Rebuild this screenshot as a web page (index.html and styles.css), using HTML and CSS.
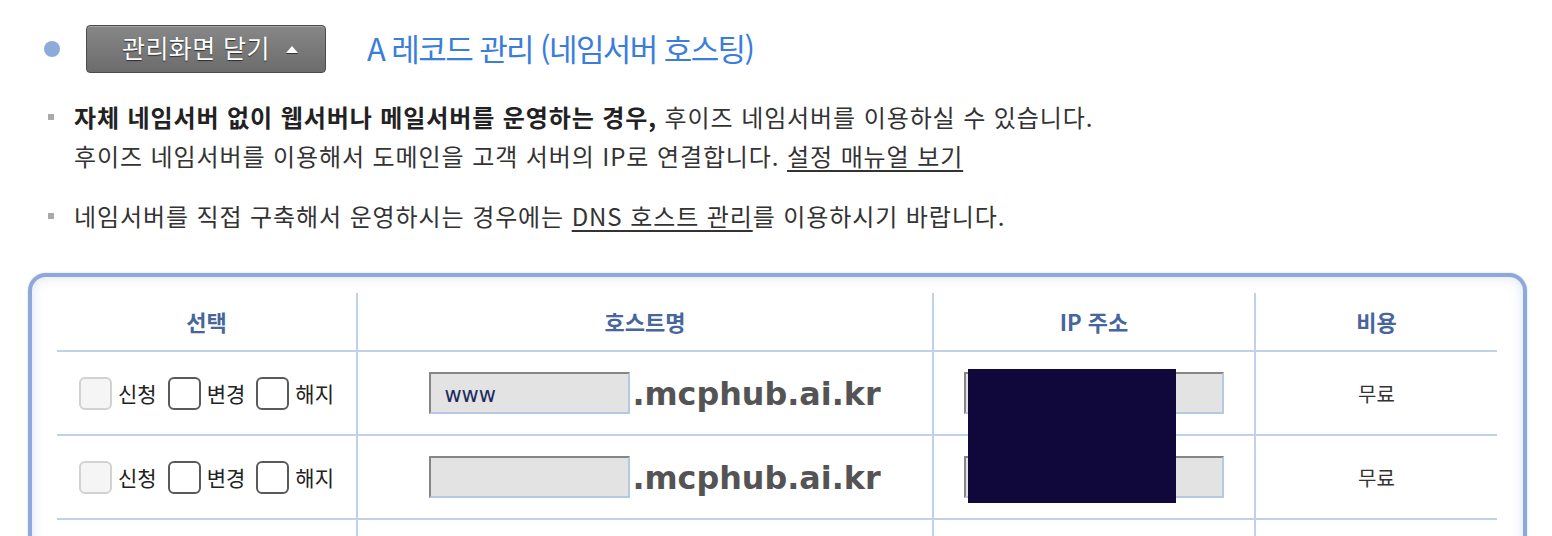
FILE: index.html
```html
<!DOCTYPE html>
<html lang="ko">
<head>
<meta charset="utf-8">
<title>A 레코드 관리</title>
<link rel="stylesheet" href="styles.css">
</head>
<body>
<div class="page">
  <div class="head">
    <span class="dot"></span>
    <button class="toggle" type="button"><span class="toggle-label">관리화면 닫기</span><span class="tri"></span></button>
    <h1 class="title">A 레코드 관리 (네임서버 호스팅)</h1>
  </div>

  <ul class="notes">
    <li><b>자체 네임서버 없이 웹서버나 메일서버를 운영하는 경우,</b> 후이즈 네임서버를 이용하실 수 있습니다.<br>후이즈 네임서버를 이용해서 도메인을 고객 서버의 IP로 연결합니다. <a class="link" href="#">설정 매뉴얼 보기</a></li>
    <li>네임서버를 직접 구축해서 운영하시는 경우에는 <a class="link" href="#">DNS 호스트 관리</a>를 이용하시기 바랍니다.</li>
  </ul>

  <div class="panel">
    <div class="grid">
      <div class="cell th">선택</div>
      <div class="cell th">호스트명</div>
      <div class="cell th">IP 주소</div>
      <div class="cell th last">비용</div>

      <div class="cell row">
        <label class="opt"><input type="checkbox" class="chk" disabled><span>신청</span></label>
        <label class="opt"><input type="checkbox" class="chk"><span>변경</span></label>
        <label class="opt"><input type="checkbox" class="chk"><span>해지</span></label>
      </div>
      <div class="cell row hostcell"><input class="field host" type="text" value="www"><span class="domain">.mcphub.ai.kr</span></div>
      <div class="cell row"><input class="field ip" type="text" value=""></div>
      <div class="cell row last fee">무료</div>

      <div class="cell row">
        <label class="opt"><input type="checkbox" class="chk" disabled><span>신청</span></label>
        <label class="opt"><input type="checkbox" class="chk"><span>변경</span></label>
        <label class="opt"><input type="checkbox" class="chk"><span>해지</span></label>
      </div>
      <div class="cell row hostcell"><input class="field host" type="text" value=""><span class="domain">.mcphub.ai.kr</span></div>
      <div class="cell row"><input class="field ip" type="text" value=""></div>
      <div class="cell row last fee">무료</div>

      <div class="cell row"></div>
      <div class="cell row"></div>
      <div class="cell row"></div>
      <div class="cell row last"></div>
    </div>
    <div class="redact"></div>
  </div>
</div>
</body>
</html>
```

FILE: styles.css
```css
html, body {
  margin: 0;
  padding: 0;
  background: #ffffff;
}

body {
  font-family: "Noto Sans CJK KR", "Noto Sans", sans-serif;
  color: #333333;
  overflow: hidden;
}

.page {
  width: 1552px;
}

/* ---------- header row ---------- */
.head {
  display: flex;
  align-items: center;
  padding: 25px 0 0 44px;
  height: 48px;
}

.dot {
  width: 16px;
  height: 16px;
  border-radius: 50%;
  background: #8eaadb;
  flex: none;
}

.toggle {
  margin-left: 26px;
  width: 240px;
  height: 48px;
  box-sizing: border-box;
  display: flex;
  align-items: center;
  padding: 0 0 0 35px;
  border: 1px solid #4b4b4b;
  border-radius: 4px;
  background: linear-gradient(#878787, #6c6c6c);
  box-shadow: inset 0 1px 0 rgba(255, 255, 255, 0.25);
  color: #ffffff;
  font-family: "Noto Sans CJK KR", sans-serif;
  font-size: 25px;
  letter-spacing: 0.4px;
  text-shadow: 0 1px 1px #2e2e2e;
  cursor: pointer;
}

.toggle-label {
  line-height: 1;
  margin-top: -3px;
}

.tri {
  width: 0;
  height: 0;
  margin-left: 16px;
  border-left: 6px solid transparent;
  border-right: 6px solid transparent;
  border-bottom: 7px solid #ffffff;
  filter: drop-shadow(0 1px 0 #333);
}

.title {
  margin: -4px 0 0 41px;
  font-size: 31px;
  font-weight: 400;
  letter-spacing: -1.6px;
  color: #3b7ddb;
  line-height: 1;
}

/* ---------- notes ---------- */
.notes {
  list-style: none;
  margin: 24px 0 0 0;
  padding: 0 0 0 74px;
}

.notes li {
  position: relative;
  font-size: 24px;
  line-height: 39px;
  color: #333333;
  letter-spacing: 0.9px;
}

.notes li + li {
  margin-top: 21px;
}

.notes li::before {
  content: "";
  position: absolute;
  left: -26px;
  top: 17px;
  width: 6px;
  height: 6px;
  background: #aaaaaa;
}

.notes b {
  color: #222222;
  font-weight: 700;
}

.link {
  color: #333333;
  text-decoration: underline;
  text-underline-offset: 4px;
  text-decoration-thickness: 2px;
}

/* ---------- panel / table ---------- */
.panel {
  position: relative;
  margin: 38px 0 0 28px;
  width: 1499px;
  height: 400px;
  box-sizing: border-box;
  padding: 16px 26px 0 25px;
  border: 4px solid #8ea8d9;
  border-radius: 18px;
  box-shadow: inset 0 0 12px rgba(150, 172, 220, 0.35), 0 0 2px rgba(142, 168, 217, 0.6);
  background: #ffffff;
}

.grid {
  display: grid;
  grid-template-columns: 301px 576px 322px 241px;
}

.cell {
  box-sizing: border-box;
  border-right: 2px solid #c2d1ea;
  border-bottom: 2px solid #c2d1ea;
  display: flex;
  align-items: center;
  justify-content: center;
}

.cell.last {
  border-right: none;
}

.th {
  height: 59px;
  font-size: 22px;
  font-weight: 700;
  color: #47669b;
  padding-bottom: 2px;
}

.row {
  height: 84px;
}

.hostcell {
  padding-left: 20px;
}

.opt {
  display: inline-flex;
  align-items: center;
  font-size: 21px;
  color: #222222;
  margin-right: 11px;
}

.opt:last-child {
  margin-right: 0;
}

.opt span {
  margin-left: 6px;
}

.chk {
  appearance: none;
  -webkit-appearance: none;
  margin: 0;
  width: 33px;
  height: 33px;
  box-sizing: border-box;
  border: 2px solid #5a5a5a;
  border-radius: 6px;
  background: #ffffff;
}

.chk:disabled {
  border-color: #d2d2d2;
  background: #f5f5f5;
}

.field {
  box-sizing: border-box;
  height: 42px;
  margin: 0;
  border-style: solid;
  border-width: 2px;
  border-color: #868686 #b7c8e4 #b7c8e4 #868686;
  background: #e3e3e3;
  font-family: "DejaVu Sans", sans-serif;
  font-size: 21px;
  color: #1c2c5c;
  padding: 4px 0 0 13px;
  outline: none;
}

.host {
  width: 201px;
}

.ip {
  width: 260px;
}

.domain {
  margin-left: 2px;
  font-family: "DejaVu Sans", "Verdana", sans-serif;
  font-weight: 700;
  font-size: 31.8px;
  color: #545454;
}

.fee {
  font-size: 20px;
  color: #333333;
}

.redact {
  position: absolute;
  left: 936px;
  top: 92px;
  width: 208px;
  height: 134px;
  background: #10083a;
}
```
